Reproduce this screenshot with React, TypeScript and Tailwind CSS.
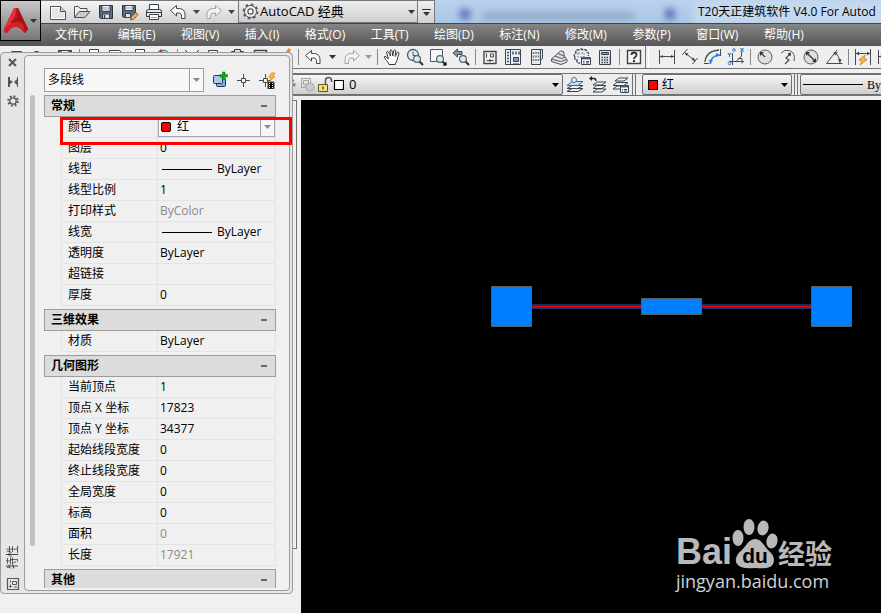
import React from "react";

const INK = "#3b4350";

type SvgProps = { children: React.ReactNode; w?: number; h?: number };

function Glyph({ children, w = 18, h = 18 }: SvgProps) {
  return (
    <svg width={w} height={h} viewBox={`0 0 ${w} ${h}`} fill="none" stroke={INK} strokeWidth="1" aria-hidden="true" className="block shrink-0">
      {children}
    </svg>
  );
}

const Magnifier = () => (
  <g>
    <path d="M13.5 13.5 17 17" stroke="#30363f" strokeWidth="2.2" />
    <circle cx="11" cy="11" r="3.4" fill="#d5eef0" stroke="#59616c" strokeWidth="1.2" />
  </g>
);

const icons: Record<string, React.ReactNode> = {
  newFile: (
    <Glyph>
      <path d="M1.500 3.500h10l5 5v8h-15z" fill="#fff" stroke="#4c5158" />
      <path d="M3 15V5h8v4h4.500v6z" fill="#e6e6e8" stroke="none" />
      <path d="M11.500 3.500v5h5" fill="#cfd2d6" stroke="#4c5158" />
    </Glyph>
  ),
  open: (
    <Glyph>
      <path d="M1.500 14.500v-11h4l1.500 2h7v3" fill="#eee" stroke="#4c5158" />
      <path d="M1.500 14.500 6 8.500h11l-5 6z" fill="#c5ccd6" stroke="#4c5158" />
    </Glyph>
  ),
  save: (
    <Glyph>
      <path d="M2.500 2.500h13v13h-12l-1-1z" fill="#5a6b84" stroke="#2c3440" />
      <path d="M5 2.500h8v6H5z" fill="#f1f2f4" stroke="#39424e" />
      <path d="M6 5h6M6 7h6" stroke="#9aa3b0" />
      <path d="M5.500 11h7v4.500h-7z" fill="#dfe3e9" stroke="#39424e" />
      <path d="M7.500 12v3" stroke="#39424e" strokeWidth="1.500" />
    </Glyph>
  ),
  saveAs: (
    <Glyph>
      <path d="M1.500 2.500h13v12h-12l-1-1z" fill="#5a6b84" stroke="#2c3440" />
      <path d="M4 2.500h8v5H4z" fill="#f1f2f4" stroke="#39424e" />
      <path d="M5 5h6" stroke="#9aa3b0" />
      <path d="M4.500 10.500h5v4h-5z" fill="#dfe3e9" stroke="#39424e" />
      <path d="m9.500 17 .8-3 4.500-4.500 2.200 2.200-4.500 4.500z" fill="#f6b75c" stroke="#8a541c" />
    </Glyph>
  ),
  print: (
    <Glyph>
      <path d="M4.500 7V1.500h9V7" fill="#fff" stroke="#3a4048" />
      <path d="M1.500 8.500q0-2 2-2h11q2 0 2 2v5h-15z" fill="#e8e9eb" stroke="#30363e" />
      <path d="M1.500 9.500h15" stroke="#30363e" />
      <path d="M4.500 11.500h9v5h-9z" fill="#fff" stroke="#3a4048" />
      <path d="M6 14.500h6" stroke="#8d949e" />
    </Glyph>
  ),
  undo: (
    <Glyph>
      <path d="M1.500 7.500 7.500 2.500v3h3q5.500.500 5.500 6.500v3.500h-3.500q.500-5-2-5.500h-3v3z" fill="#fdfdfd" stroke="#3f4650" strokeLinejoin="round" />
    </Glyph>
  ),
  redo: (
    <Glyph>
      <path d="M16.500 7.500 10.500 2.500v3h-3q-5.500.500-5.500 6.500v3.500h3.500q-.500-5 2-5.500h3v3z" fill="#f3f3f3" stroke="#a0a4a8" strokeLinejoin="round" />
    </Glyph>
  ),
  preview: (
    <Glyph>
      <path d="M1.500 2.500h10l4 4v10h-14z" fill="#fff" />
      <Magnifier />
    </Glyph>
  ),
  globe: (
    <Glyph>
      <circle cx="9" cy="9" r="7" fill="#b9d7ec" stroke="#4a6b86" />
      <path d="m6 2 5 6" stroke="#c33" strokeWidth="2" />
    </Glyph>
  ),
  cut: (
    <Glyph>
      <path d="M2 2q6 4 9 12M16 2q-6 4-9 12" />
      <circle cx="5" cy="15" r="2" />
      <circle cx="13" cy="15" r="2" />
    </Glyph>
  ),
  copy: (
    <Glyph>
      <path d="M2.500 2.500h9v10h-9z" fill="#fff" />
      <path d="M6.500 5.500h9v10h-9z" fill="#fff" />
    </Glyph>
  ),
  paste: (
    <Glyph>
      <path d="M2.500 3.500h12v13h-12z" fill="#888" />
      <path d="M5.500 1.500h6v3h-6z" fill="#ddd" />
    </Glyph>
  ),
  match: (
    <Glyph>
      <path d="M2.500 2.500h12v13h-12z" fill="#fff" strokeWidth="1.500" />
      <path d="M5 5.500h7" stroke="#3f80c4" strokeWidth="2" />
    </Glyph>
  ),
  brush: (
    <Glyph>
      <path d="m15 1-7 9" stroke="#e98a25" strokeWidth="3" />
      <path d="m8 10-5 6" />
    </Glyph>
  ),
  hand: (
    <Glyph>
      <path
        d="M6 16.500q-.500-2-2.500-4L1 9q1-1.500 2.500 0L5.500 11 3.500 4q.500-1.500 2 0L7.500 8 7 2.500q1-1.500 2 0L9.800 8l1-5.500q1.200-1.200 1.900 0L12.200 8.500l2-4q1.500-.800 1.800.7l-2 7q-.500 2-1.500 2.800l-.200 1.500z"
        fill="#fff"
        stroke="#3a3d42"
        strokeLinejoin="round"
      />
    </Glyph>
  ),
  zoomRealtime: (
    <Glyph>
      <circle cx="7" cy="7" r="5.500" fill="#e6eaee" stroke="#505863" strokeWidth="1.300" />
      <path d="M7 3.500v4h4" stroke="#505863" />
      <Magnifier />
    </Glyph>
  ),
  zoomWindow: (
    <Glyph>
      <path d="M1.500 1.500h12v12h-12z" fill="#f5f6f7" stroke="#505863" />
      <Magnifier />
      <path d="M17.500 13.500v4h-4z" fill="#111" stroke="none" />
    </Glyph>
  ),
  zoomPrev: (
    <Glyph>
      <path d="m1 5 4.500-4v2.500H10v3H5.500V9z" fill="#7f93ac" stroke="#444c58" />
      <Magnifier />
    </Glyph>
  ),
  properties: (
    <Glyph>
      <path d="M3 3.500h12v12H3z" fill="#f4f4f2" stroke="#44484e" strokeWidth="1.400" />
      <path d="M9.500 6h3v3h-3zM5.500 5.500v4M5.500 12.500h7M9 11v3" stroke="#44484e" />
    </Glyph>
  ),
  designCenter: (
    <Glyph>
      <path d="M1.500 1.500h15v15h-15z" fill="#eef1f5" />
      <path d="M6.500 1.500v15" />
      <path d="M3 4.500h2M3 7.500h2M3 10.500h2M3 13.500h2M9 3.500v3M12 3.500v3M15 3.500v3" stroke="#38527a" strokeWidth="1.500" />
      <path d="M9.500 9.500h5v4h-5z" fill="#7f9bc4" />
      <path d="M9 15.500h6" stroke="#7f9bc4" />
    </Glyph>
  ),
  toolPalette: (
    <Glyph>
      <path d="M4.500 1.500h11v9l-2 1.500v4.500h-9z" fill="#e8eaec" />
      <path d="M13.500 2v10" />
      <path d="M6.500 4v10M9 4v10M11.500 4v10" stroke="#68717d" strokeDasharray="2 1.500" strokeWidth="1.400" />
    </Glyph>
  ),
  sheetSet: (
    <Glyph>
      <path d="m1.500 11 9-8 3 .5 1 5 2.500 3v2.500l-6 2.500-9.500-3z" fill="#dfe2e6" stroke="#4f5761" />
      <path d="m1.500 11 9 2.500 6-2M5 8l6.500 2.500 4-1.500M8 5.500l6 2.500" stroke="#4f5761" />
    </Glyph>
  ),
  markup: (
    <Glyph>
      <path d="M2 9Q0 6 3 5q-1-4 3-3 2-2 4 0 4-1 4 2 3 1 1 4M2 9q-1 3 2 3-1 3 3 3" strokeDasharray="3 1" strokeWidth="1.300" />
      <path d="M5 5h6v4H5z" stroke="#75808e" strokeDasharray="2 1" />
      <path d="M8.500 9.500h9v7h-9z" fill="#fff" />
      <path d="M9 10.500h8" stroke="#44608a" strokeWidth="2" />
      <path d="M10 13.500h1.500M13 13.500h3M10 15h1.500M13 15h3" />
    </Glyph>
  ),
  calculator: (
    <Glyph>
      <path d="M3.500 2.500h11v14h-11z" fill="#e4e6e9" />
      <path d="M5.500 4.500h7v2h-7z" fill="#8a99ad" />
      <path d="M5.500 9.500h8M5.500 12h8M5.500 14.500h8" strokeDasharray="1.500 1" strokeWidth="1.400" />
    </Glyph>
  ),
  help: (
    <Glyph>
      <path d="M2.500 2.500h13v13h-13z" fill="#f6f6f6" stroke="#3d4249" strokeWidth="1.400" />
      <path d="M6.500 7q0-2.500 2.500-2.500T11.500 7q0 1.300-1.300 2T9 11" stroke="#30343a" strokeWidth="1.800" />
      <path d="M9 12v2" stroke="#30343a" strokeWidth="2" />
    </Glyph>
  ),
  dimLinear: (
    <Glyph>
      <path d="M1.500 2v14M16.500 2v14M2 8.500h14" stroke="#444b54" />
      <path d="m2 8.500 3-1.500v3zm14 0L13 7v3z" fill="#444b54" stroke="none" />
    </Glyph>
  ),
  dimAligned: (
    <Glyph>
      <path d="M6.500 1 1 7M16.500 10l-5 6M3.500 4.500l11 8.500" stroke="#444b54" />
      <path d="m3.500 4.500 4 1-2 2.500zm11 8.500-4-1 2-2.500z" fill="#444b54" stroke="none" />
    </Glyph>
  ),
  dimArc: (
    <Glyph>
      <path d="M1 14Q2 3 15 2" stroke="#444b54" strokeWidth="1.300" />
      <path d="M6.500 16Q6 8 16 7" stroke="#2a7fe0" strokeWidth="1.500" />
      <path d="M0 15.500h5M16.500 1v7" stroke="#444b54" />
      <path d="m6 16-1-4h4zm10-9-4-2v4z" fill="#2a7fe0" stroke="none" />
    </Glyph>
  ),
  dimOrdinate: (
    <Glyph>
      <path d="M5.500 5v12M2 13.500h15M9.500 13l5-5V4M11 10.500h4v5" stroke="#444b54" />
      <path d="m1 5 1.500 2L4 5M2.500 7v2M13.500 0l3 4M16.500 0l-3 4" stroke="#2a7fe0" strokeWidth="1.200" />
      <circle cx="7" cy="2" r="1.300" stroke="#2a7fe0" />
      <circle cx="2.500" cy="15.500" r="1.300" stroke="#2a7fe0" />
    </Glyph>
  ),
  dimRadius: (
    <Glyph>
      <circle cx="9" cy="9" r="7" fill="#dedfe1" stroke="#555b63" />
      <path d="m9 9-4-4" stroke="#333" strokeWidth="1.200" />
      <path d="M4 4h4L4 8z" fill="#333" stroke="none" />
    </Glyph>
  ),
  dimJogged: (
    <Glyph>
      <path d="M2 5q4-4 8-2.500 7 2 5 10.500" stroke="#555b63" />
      <path d="m6 16 4-4-3-2 4-4" stroke="#444b54" strokeWidth="1.200" />
      <path d="m12 4.500-.500 4-3-3z" fill="#333" stroke="none" />
    </Glyph>
  ),
  dimDiameter: (
    <Glyph>
      <circle cx="9" cy="9" r="7" fill="#dedfe1" stroke="#555b63" />
      <path d="m4.500 4.500 9 9" stroke="#333" strokeWidth="1.200" />
      <path d="M4 4h4L4 8zm10 10h-4l4-4z" fill="#333" stroke="none" />
    </Glyph>
  ),
  dimAngular: (
    <Glyph>
      <path d="M12 2 1.500 15.500h16M9.500 4.500q5 3 5.500 10.500" stroke="#444b54" />
      <path d="m8.500 4 4.500.500-3 3zm6.500 11-2-4h3.500z" fill="#444b54" stroke="none" />
    </Glyph>
  ),
  quickDim: (
    <Glyph>
      <path d="M1.500 1v16M16.500 1v16M2 5.500h14" stroke="#444b54" />
      <path d="m2 5.500 3-2v4zm14 0-3-2v4z" fill="#444b54" stroke="none" />
      <path d="m11 7-6 5 3 .500L6 17l7-5.500-3-.500z" fill="#ffbf3d" stroke="#cf7415" strokeWidth=".8" />
    </Glyph>
  ),
  layerFind: (
    <Glyph>
      <path d="m1 15.500 5-3h11l-5 3zM1 12.500l5-3h11l-5 3z" fill="#eee" />
      <path d="m1 9.500 5-4h11l-5 4z" fill="#bfe0fb" stroke="#1877c8" />
      <circle cx="8" cy="4" r="2.500" fill="#dff2f8" stroke="#606975" />
    </Glyph>
  ),
  layerPrev: (
    <Glyph>
      <path d="m4 16 4-3h9l-4 3zM4 12.500l4-3h9l-4 3zM4 9l4-3h9l-4 3z" fill="#f2f2f2" />
      <path d="M2 2.500h3q2 0 2 2.500" stroke="#222" strokeWidth="1.300" />
      <path d="m0 2.500 3-2.500v5z" fill="#222" stroke="none" />
    </Glyph>
  ),
  layerStates: (
    <Glyph>
      <path d="m1 13 4-3h11l-4 3zM1 9.500l4-3h11l-4 3zM3 5l4-3h9l-4 3z" fill="#f2f2f2" />
      <path d="M8.500 9.500h8v7h-8z" fill="#fff" />
      <path d="M9 10.500h7" stroke="#44608a" strokeWidth="2" />
      <path d="M10 13.500h1M12 13.500h3M10 15h1M12 15h3" />
    </Glyph>
  ),
};

function ToolButton({ icon, label, wide }: { icon: string; label: string; wide?: boolean }) {
  return (
    <button type="button" aria-label={label} className={`flex h-full shrink-0 items-center justify-center ${wide ? "w-6" : "w-[23px]"}`}>
      {icons[icon]}
    </button>
  );
}

function Caret({ className = "", color = "#333" }: { className?: string; color?: string }) {
  return (
    <span className={`flex shrink-0 items-center justify-center ${className}`}>
      <svg width="7" height="4" viewBox="0 0 7 4" aria-hidden="true">
        <path d="M0 0h7L3.500 4z" fill={color} />
      </svg>
    </span>
  );
}

const Divider = () => <span className="flex h-full w-[6px] shrink-0 justify-center py-[3px]"><span className="w-px bg-[#84878b]" /></span>;

function Gear() {
  return (
    <svg width="17" height="17" viewBox="0 0 17 17" fill="none" stroke="#50565e" aria-hidden="true" className="shrink-0">
      <circle cx="8.500" cy="8.500" r="7" strokeWidth="1.800" strokeDasharray="2.750 2.750" />
      <circle cx="8.500" cy="8.500" r="6" fill="#eee" />
      <circle cx="8.500" cy="8.500" r="2.600" fill="#fff" strokeWidth="1.200" />
    </svg>
  );
}

const menus = ["文件(F)", "编辑(E)", "视图(V)", "插入(I)", "格式(O)", "工具(T)", "绘图(D)", "标注(N)", "修改(M)", "参数(P)", "窗口(W)", "帮助(H)"];

function Header() {
  return (
    <header className="flex h-[46px] shrink-0 bg-[#565656]">
      <button type="button" aria-label="应用程序菜单" className="flex h-[41px] w-[41px] shrink-0 items-center justify-center gap-[2px] border border-black bg-linear-to-b from-[#c9c9c9] to-[#777]">
        <svg width="24" height="26" viewBox="0 0 24 26" aria-hidden="true" className="shrink-0">
          <path d="M10 0h4l10 21-3 4-5-5q-5-2-9 .5L3 25H1l-1-4z" fill="#c3161c" />
          <path d="M10 0h2l-1 8-7 12-4 1z" fill="#e5333a" />
          <path d="M14 0l10 21-3 4-5-5-3-10z" fill="#ad1217" />
          <path d="M0 21q9-10 19-5l2 9-5-5q-5-2-9 .5L3 25H1z" fill="#d0242b" />
          <path d="m7 14 9-3" stroke="#8e1115" />
        </svg>
        <Caret />
      </button>
      <div className="flex min-w-0 flex-1 flex-col">
        <div className="flex h-6 border-b border-[#444] bg-[#b9d1ea]">
          <div className="flex shrink-0 items-center border-t border-[#777] bg-linear-to-b from-[#f4f4f4] to-[#d2d2d2] pl-[5px]">
            <ToolButton icon="newFile" label="新建" wide />
            <ToolButton icon="open" label="打开" wide />
            <ToolButton icon="save" label="保存" wide />
            <ToolButton icon="saveAs" label="另存为" wide />
            <ToolButton icon="print" label="打印" wide />
            <ToolButton icon="undo" label="放弃" wide />
            <Caret className="w-3" color="#444" />
            <ToolButton icon="redo" label="重做" />
            <Caret className="w-[13px]" color="#444" />
          </div>
          <div className="flex w-[180px] shrink-0 items-center border border-[#777] bg-linear-to-b from-[#eeeeee] to-[#cfcfcf] pl-[3px]">
            <Gear />
            <select aria-label="工作空间" className="h-full min-w-0 flex-1 appearance-none bg-transparent pl-px text-[13px] text-black outline-none">
              <option>AutoCAD 经典</option>
            </select>
            <Caret className="w-3" />
          </div>
          <button type="button" aria-label="自定义快速访问工具栏" className="flex w-[17px] shrink-0 flex-col items-center justify-center gap-[2px] border-t border-r border-[#777] bg-linear-to-b from-[#eee] to-[#d2d2d2]">
            <span className="h-px w-[9px] bg-[#333]" />
            <Caret />
          </button>
          <div className="relative flex min-w-0 flex-1 items-center bg-linear-to-b from-[#bad2ed] to-[#a9c7e6] pl-[263px]">
            <div aria-hidden="true" className="absolute inset-0 overflow-hidden">
              <div className="absolute inset-0 blur-[3px]">
                <span className="absolute top-2 left-6 h-3 w-3 rounded-full bg-[#6678bd]" />
                <span className="absolute top-3 left-12 h-2 w-[150px] bg-[#93acca]" />
                <span className="absolute top-2 left-[229px] h-3 w-3 rounded-full bg-[#6678bd]" />
                <span className="absolute top-0 left-[258px] h-6 w-[240px] bg-[#c4d8ee]" />
              </div>
            </div>
            <h1 className="relative text-xs whitespace-nowrap text-black">T20天正建筑软件 V4.0 For Autod</h1>
          </div>
        </div>
        <nav className="flex flex-1 items-center justify-between bg-linear-to-b from-[#868686] to-[#565656] pr-[77px] pl-[14px] text-xs text-white">
          {menus.map((m) => (
            <button key={m} type="button" className="shrink-0 whitespace-nowrap">
              {m}
            </button>
          ))}
        </nav>
      </div>
    </header>
  );
}

function StandardToolbar() {
  return (
    <div className="flex h-[23px] shrink-0 overflow-hidden border-b border-[#737373] bg-[#efefef]">
      <div className="flex shrink-0 items-center border-r border-[#737373] pl-[7px]">
        <ToolButton icon="newFile" label="新建图形" />
        <ToolButton icon="open" label="打开图形" />
        <ToolButton icon="save" label="保存图形" />
        <Divider />
        <ToolButton icon="print" label="打印图形" />
        <ToolButton icon="preview" label="打印预览" />
        <ToolButton icon="print" label="发布" />
        <ToolButton icon="globe" label="三维打印" />
        <Divider />
        <ToolButton icon="cut" label="剪切" />
        <ToolButton icon="copy" label="复制" />
        <ToolButton icon="paste" label="粘贴" />
        <ToolButton icon="match" label="特性匹配" />
        <ToolButton icon="brush" label="块编辑器" />
        <Divider />
        <ToolButton icon="undo" label="撤销" />
        <Caret className="w-4" />
        <ToolButton icon="redo" label="恢复" />
        <Caret className="w-[11px]" color="#999" />
        <Divider />
        <ToolButton icon="hand" label="平移" />
        <ToolButton icon="zoomRealtime" label="实时缩放" />
        <ToolButton icon="zoomWindow" label="窗口缩放" />
        <ToolButton icon="zoomPrev" label="缩放上一个" />
        <Divider />
        <ToolButton icon="properties" label="特性" />
        <ToolButton icon="designCenter" label="设计中心" />
        <ToolButton icon="toolPalette" label="工具选项板" />
        <ToolButton icon="sheetSet" label="图纸集" />
        <ToolButton icon="markup" label="标记集" />
        <ToolButton icon="calculator" label="快速计算器" />
        <Divider />
        <ToolButton icon="help" label="帮助" />
      </div>
      <div className="ml-[2px] flex shrink-0 items-center border-l border-white pl-[6px]">
        <ToolButton icon="dimLinear" label="线性标注" />
        <ToolButton icon="dimAligned" label="对齐标注" />
        <ToolButton icon="dimArc" label="弧长标注" />
        <ToolButton icon="dimOrdinate" label="坐标标注" />
        <Divider />
        <ToolButton icon="dimRadius" label="半径标注" />
        <ToolButton icon="dimJogged" label="折弯标注" />
        <ToolButton icon="dimDiameter" label="直径标注" />
        <ToolButton icon="dimAngular" label="角度标注" />
        <Divider />
        <ToolButton icon="quickDim" label="快速标注" />
        <ToolButton icon="dimLinear" label="基线标注" />
      </div>
    </div>
  );
}

const comboFrame = "flex shrink-0 items-center rounded-[2px] border border-[#6f6f6f] bg-linear-to-b from-[#f6f6f6] to-[#cfcfcf]";

function LayerToolbar() {
  return (
    <div className="mt-[4px] flex h-[23px] shrink-0 items-stretch overflow-hidden border-y border-[#737373] bg-[#ececec]">
      <div className={`${comboFrame} w-[563px] pl-[283px]`}>
        <svg width="60" height="17" viewBox="0 0 60 17" fill="none" aria-hidden="true" className="shrink-0">
          <circle cx="6" cy="8" r="4" stroke="#777" strokeWidth="3" strokeDasharray="2 2" />
          <path d="M17.500 2.500h9v9h-9zM19.500 4.500h5v4h-5z" stroke="#a3a3a3" />
          <circle cx="26" cy="11" r="4" fill="#ccc" stroke="#b0b0b0" strokeWidth="2" strokeDasharray="2 1" />
          <path d="M34.500 8.500h9v7h-9z" fill="#f2df7e" stroke="#61552c" />
          <path d="M41.500 8V4.500q0-3 3-3t3 3V6" stroke="#555" strokeWidth="1.500" />
          <path d="M39 10.500v3" stroke="#61552c" strokeWidth="1.500" />
          <path d="M50.500 4.500h9v9h-9z" fill="#fff" stroke="#000" strokeWidth="1.200" />
        </svg>
        <select aria-label="图层" className="h-full min-w-0 flex-1 appearance-none bg-transparent pl-[5px] text-[13px] text-black outline-none">
          <option>0</option>
        </select>
        <Caret className="w-[14px]" color="#000" />
      </div>
      <div className="flex shrink-0 items-center border-r border-[#737373]">
        <ToolButton icon="layerFind" label="将对象的图层置为当前" />
        <ToolButton icon="layerPrev" label="上一个图层" />
        <ToolButton icon="layerStates" label="图层状态管理器" />
      </div>
      <div className="ml-[2px] flex shrink-0 border-x border-[#737373] pr-[2px] pl-[6px]">
        <div className={`${comboFrame} w-[150px] pl-[5px]`}>
          <span className="h-[10px] w-[10px] shrink-0 border border-black bg-[#f00]" />
          <select aria-label="颜色控制" className="h-full min-w-0 flex-1 appearance-none bg-transparent pl-1 text-xs text-black outline-none">
            <option>红</option>
          </select>
          <Caret className="w-[14px]" color="#000" />
        </div>
      </div>
      <div className="ml-[2px] flex min-w-0 flex-1 border-l border-[#737373] pl-[2px]">
        <div className={`${comboFrame} w-[170px] pl-[2px]`}>
          <span className="h-px w-[60px] shrink-0 bg-black" />
          <select aria-label="线型控制" className="h-full min-w-0 flex-1 appearance-none bg-transparent pl-1 font-['Liberation_Serif',serif] text-xs text-black outline-none">
            <option>ByLayer</option>
          </select>
        </div>
      </div>
    </div>
  );
}

type Row = { label: string; value?: string; line?: boolean; muted?: boolean; color?: boolean };

const groups: { title: string; rows: Row[] }[] = [
  {
    title: "常规",
    rows: [
      { label: "颜色", value: "红", color: true },
      { label: "图层", value: "0" },
      { label: "线型", value: "ByLayer", line: true },
      { label: "线型比例", value: "1" },
      { label: "打印样式", value: "ByColor", muted: true },
      { label: "线宽", value: "ByLayer", line: true },
      { label: "透明度", value: "ByLayer" },
      { label: "超链接" },
      { label: "厚度", value: "0" },
    ],
  },
  { title: "三维效果", rows: [{ label: "材质", value: "ByLayer" }] },
  {
    title: "几何图形",
    rows: [
      { label: "当前顶点", value: "1" },
      { label: "顶点 X 坐标", value: "17823" },
      { label: "顶点 Y 坐标", value: "34377" },
      { label: "起始线段宽度", value: "0" },
      { label: "终止线段宽度", value: "0" },
      { label: "全局宽度", value: "0" },
      { label: "标高", value: "0" },
      { label: "面积", value: "0", muted: true },
      { label: "长度", value: "17921", muted: true },
    ],
  },
  { title: "其他", rows: [] },
];

function Group({ title, rows }: { title: string; rows: Row[] }) {
  return (
    <section>
      <button type="button" className="flex h-[22px] w-full items-center justify-between border border-[#9c9c9c] bg-[#dcdcdc] pr-2 pl-[6px] text-xs font-bold text-black">
        {title}
        <span className="h-[2px] w-[6px] bg-[#666]" />
      </button>
      {rows.length > 0 && (
        <div className="pl-[17px]">
          <table className="w-full table-fixed border-separate border-spacing-0 text-xs">
            <tbody>
              {rows.map((r) => (
                <tr key={r.label} className="h-[21px]">
                  <th scope="row" className="w-[97px] border-r border-b border-l border-[#e3e3e3] p-0 pl-[6px] text-left leading-5 font-normal whitespace-nowrap text-black">
                    {r.label}
                  </th>
                  <td className={`border-r border-b border-[#e3e3e3] p-0 leading-5 ${r.muted ? "text-[#8a8a8a]" : "text-black"}`}>
                    {r.color ? (
                      <div className="flex h-5 items-center border border-[#a5a5a5] bg-[#f7f7f7] pl-[2px]">
                        <span className="h-[10px] w-[10px] shrink-0 rounded-[2px] border border-black bg-[#f00]" />
                        <select aria-label="颜色" className="h-full min-w-0 flex-1 appearance-none bg-transparent pl-[6px] text-xs outline-none">
                          <option>{r.value}</option>
                        </select>
                        <Caret className="h-full w-[14px] border-l border-[#a5a5a5]" color="#8a8a8a" />
                      </div>
                    ) : (
                      <div className="flex h-5 items-center gap-[5px] pl-[2px]">
                        {r.line && <span className="ml-[2px] h-px w-[50px] bg-black" />}
                        {r.value}
                      </div>
                    )}
                  </td>
                </tr>
              ))}
            </tbody>
          </table>
        </div>
      )}
    </section>
  );
}

function PropertiesPalette() {
  return (
    <aside className="absolute top-[52px] left-0 flex h-[542px] w-[293px] rounded-[4px] border border-[#9c9c9c] bg-[#e6e6e6] p-[2px] pl-0">
      <div className="flex w-[23px] shrink-0 flex-col items-center justify-between pt-px">
        <div className="flex flex-col items-center gap-[5px]">
          <button type="button" aria-label="关闭" className="block">
            <svg width="14" height="14" viewBox="0 0 14 14" stroke="#555" strokeWidth="2" aria-hidden="true">
              <path d="m3 3 7 7M10 3l-7 7" />
            </svg>
          </button>
          <button type="button" aria-label="自动隐藏" className="block">
            <svg width="14" height="14" viewBox="0 0 14 14" fill="#555" aria-hidden="true">
              <path d="M2 2h2v10H2zM4 5l3 2-3 2zM8 7l3-3v6zM11 2h1v10h-1z" />
            </svg>
          </button>
          <button type="button" aria-label="特性菜单" className="block">
            <svg width="14" height="14" viewBox="0 0 14 14" fill="none" stroke="#555" aria-hidden="true">
              <circle cx="7" cy="7" r="4.800" strokeWidth="2" strokeDasharray="1.880 1.880" />
              <circle cx="7" cy="7" r="3.200" strokeWidth="1.300" />
            </svg>
          </button>
        </div>
        <div className="flex flex-col items-center gap-2">
          <h2 className="rotate-180 text-xs leading-4 text-[#444] [text-orientation:sideways] [writing-mode:vertical-rl]">特性</h2>
          <svg width="14" height="14" viewBox="0 0 14 14" fill="none" stroke="#555" aria-hidden="true">
            <path d="M1.500 1.500h11v11h-11z" strokeWidth="1.200" />
            <path d="M6.500 4.500h4v3h-4zM4.500 3.500v2M4.500 7.500v3M3 9.500h3M8 10h3" />
          </svg>
        </div>
      </div>
      <div className="flex min-w-0 flex-1 rounded-[4px] border border-[#9c9c9c] bg-[#f0f0f0] pt-3 pr-[13px] pb-[2px] pl-[5px]">
        <div className="mt-[27px] mb-[42px] w-[5px] shrink-0 rounded-full bg-[#c0c0c0]" />
        <div className="ml-[9px] flex min-w-0 flex-1 flex-col overflow-hidden">
          <div className="flex h-6 shrink-0 items-center">
            <div className="flex h-6 w-[160px] items-center border border-[#9c9c9c] bg-[#f8f8f8]">
              <select aria-label="对象类型" className="h-full min-w-0 flex-1 appearance-none bg-transparent pl-[3px] text-xs text-black outline-none">
                <option>多段线</option>
              </select>
              <Caret className="h-full w-[14px] border-l border-[#9c9c9c]" color="#8a8a8a" />
            </div>
            <div className="flex flex-1 items-center justify-between pl-2">
              <button type="button" aria-label="切换 PICKADD">
                <svg width="16" height="18" viewBox="0 0 16 18" aria-hidden="true">
                  <rect x="4.500" y="7.500" width="9" height="8" rx="1" fill="#80ade0" stroke="#29384c" />
                  <rect x="1.500" y="4.500" width="9" height="8" rx="1" fill="#a7c9ef" stroke="#29384c" />
                  <path d="M10.500 1h2.500v2.500h2.500V6H13v2.500h-2.500V6H8V3.500h2.500z" fill="#14a51b" stroke="#0b6e12" strokeWidth=".5" />
                </svg>
              </button>
              <button type="button" aria-label="选择对象">
                <svg width="14" height="18" viewBox="0 0 14 18" fill="none" stroke="#4a4a4a" aria-hidden="true">
                  <path d="M6.500 3v4M6.500 11v5M0 9.500h4.500M8.500 9.500H13M4.500 7.500h4v4h-4z" />
                </svg>
              </button>
              <button type="button" aria-label="快速选择">
                <svg width="17" height="18" viewBox="0 0 17 18" fill="none" stroke="#4a4a4a" aria-hidden="true">
                  <path d="M6.500 3v4M6.500 11v5M0 9.500h4.500M8.500 9.500H12M4.500 7.500h4v4h-4z" />
                  <path d="m12.500 2-3 4 2.500.500L11 10l5-4.500-2-.500 2-3z" fill="#ffbb3c" stroke="#dc7a15" strokeWidth=".7" />
                  <path d="M9 11h6v7H9z" fill="#000" />
                  <path d="M10.500 12v6M13.500 12v6" stroke="#fff" strokeDasharray="1 1" />
                </svg>
              </button>
            </div>
          </div>
          <div className="mt-[3px] flex min-h-0 flex-1 flex-col gap-[3px] overflow-hidden">
            {groups.map((g) => (
              <Group key={g.title} {...g} />
            ))}
          </div>
        </div>
      </div>
    </aside>
  );
}

function Drawing() {
  return (
    <svg width="362" height="42" viewBox="0 0 362 42" className="absolute top-[186px] left-[190px]" aria-label="多段线">
      <path d="M41 18h280v5H41z" fill="#14305e" />
      <path d="M41 20h280v1.500H41z" fill="#f00010" />
      <g fill="#007fff" stroke="#5b5f63">
        <path d="M.5.5h40v40H.5zM320.500.5h40v40h-40zM150.500 12.500h60v16h-60z" />
      </g>
    </svg>
  );
}

function Watermark() {
  return (
    <div className="absolute right-[49px] bottom-[20px] flex flex-col text-[#b9b9b9]">
      <div className="flex h-[50px] items-end">
        <span className="font-['Liberation_Sans',sans-serif] text-[36px] leading-[34px] font-bold">Bai</span>
        <span className="relative h-[50px] w-[46px] shrink-0">
          <svg width="46" height="50" viewBox="0 0 46 50" fill="#b9b9b9" aria-hidden="true">
            <ellipse cx="6" cy="19" rx="5.500" ry="8" />
            <ellipse cx="17" cy="8" rx="5.500" ry="8" />
            <ellipse cx="31" cy="9" rx="5.500" ry="7.500" transform="rotate(12 31 9)" />
            <ellipse cx="40" cy="22" rx="5.500" ry="7.500" transform="rotate(12 40 22)" />
            <path d="M23 20c7 0 9 8 14 12s6 9 4 13-8 5-18 4c-9 1-15 0-18-4s0-10 4-13 7-12 14-12z" />
          </svg>
          <span className="absolute inset-x-0 bottom-0 text-center font-['Liberation_Sans',sans-serif] text-[21px] leading-[26px] font-bold text-black">du</span>
        </span>
        <span className="text-[27px] leading-[30px] font-bold">经验</span>
      </div>
      <span className="text-[18px] leading-[24px] text-[#d2d2d2]">jingyan.baidu.com</span>
    </div>
  );
}

export default function App() {
  return (
    <div className="relative flex h-screen flex-col overflow-hidden bg-[#f0f0f0] font-['Open_Sans','Noto_Sans_CJK_SC',sans-serif]">
      <Header />
      <StandardToolbar />
      <LayerToolbar />
      <main className="mt-[4px] flex min-h-0 flex-1">
        <div className="w-[301px] shrink-0 pr-1 pb-[64px]">
          <div className="h-full border-y border-r border-[#737373]" />
        </div>
        <div className="relative min-w-0 flex-1 overflow-hidden bg-black">
          <Drawing />
          <Watermark />
        </div>
      </main>
      <PropertiesPalette />
      <div aria-hidden="true" className="pointer-events-none absolute top-[117px] left-[60px] h-[28px] w-[232px] border-[3px] border-[#f00]" />
    </div>
  );
}
